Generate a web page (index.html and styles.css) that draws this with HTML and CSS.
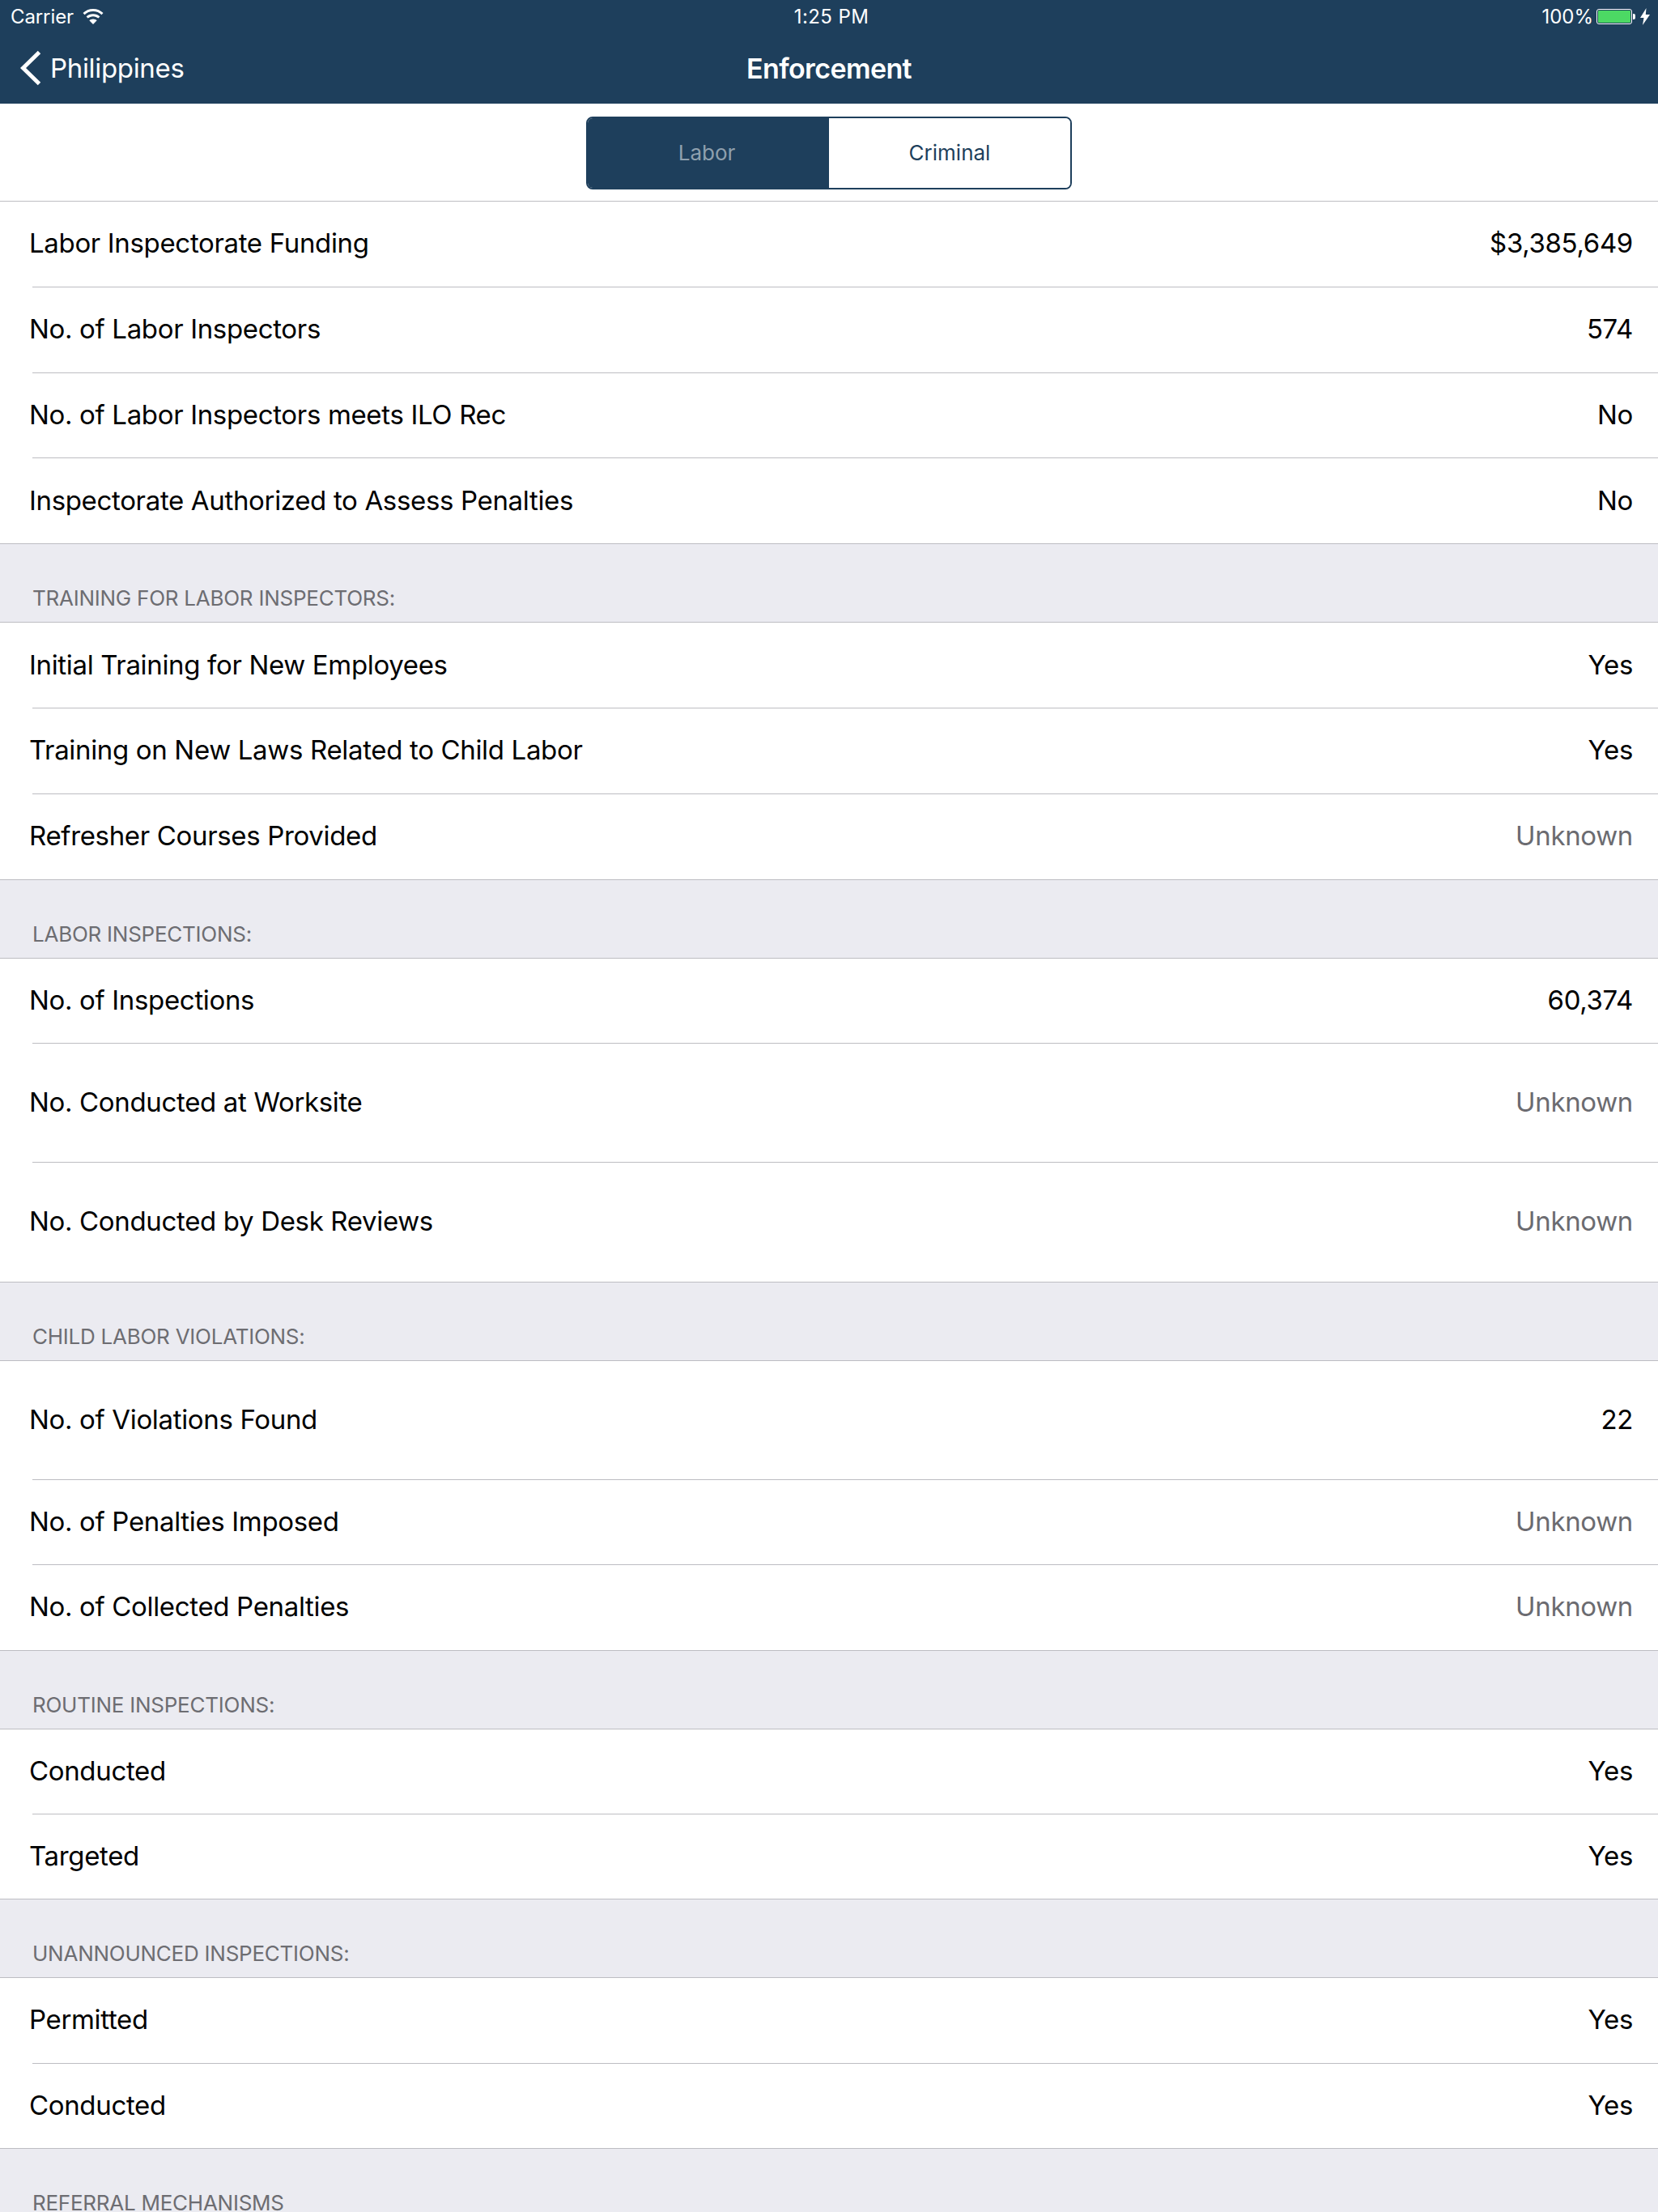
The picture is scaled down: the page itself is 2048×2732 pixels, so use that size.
FILE: index.html
```html
<!DOCTYPE html>
<html lang="en">
<head>
    <meta charset="UTF-8">
    <title>Enforcement</title>
    <link rel="stylesheet" href="styles.css">
</head>
<body>
    <header class="nav">
        <div class="status-bar">
            <div class="status-left">
                <span>Carrier</span>
                <svg class="wifi" width="26" height="19" viewBox="0 0 26 19">
                    <path fill="#fff" d="M13 0C8 0 3.800 1.900.5 5l2 2.200C5.200 4.600 8.900 3 13 3s7.800 1.600 10.500 4.200l2-2.200C22.200 1.900 18 0 13 0z"/>
                    <path fill="#fff" d="M13 6.200c-3.300 0-6.200 1.200-8.400 3.200l2 2.200C8.300 10.100 10.500 9.200 13 9.200s4.700.9 6.400 2.400l2-2.200c-2.200-2-5.100-3.200-8.400-3.200z"/>
                    <path fill="#fff" d="M13 12.400c-1.900 0-3.500.7-4.700 1.800L13 19l4.700-4.800c-1.200-1.100-2.800-1.800-4.700-1.800z"/>
                </svg>
            </div>
            <div class="status-time">1:25 PM</div>
            <div class="status-right">
                <span>100%</span>
                <div class="battery"><div class="battery-fill"></div></div>
                <div class="battery-nub"></div>
                <svg class="bolt" width="12" height="21" viewBox="0 0 12 21">
                    <path fill="#fff" d="M7.500 0L0 12h4.500L3 21l9-13H6.800z"/>
                </svg>
            </div>
        </div>
        <div class="nav-bar">
            <a class="back" href="#">
                <svg width="26" height="44" viewBox="0 0 26 44">
                    <path fill="none" stroke="#fff" stroke-width="5" d="M23.500 2.500L3.500 22l20 19.500"/>
                </svg>
                <span>Philippines</span>
            </a>
            <h1>Enforcement</h1>
        </div>
    </header>

    <div class="toolbar">
        <div class="segments">
            <button class="segment active">Labor</button>
            <button class="segment">Criminal</button>
        </div>
    </div>

    <main>
        <section class="group roomy">
            <div class="row"><span>Labor Inspectorate Funding</span><span>$3,385,649</span></div>
            <div class="row"><span>No. of Labor Inspectors</span><span>574</span></div>
            <div class="row"><span>No. of Labor Inspectors meets ILO Rec</span><span>No</span></div>
            <div class="row"><span>Inspectorate Authorized to Assess Penalties</span><span>No</span></div>
        </section>

        <h2>TRAINING FOR LABOR INSPECTORS:</h2>
        <section class="group roomy">
            <div class="row"><span>Initial Training for New Employees</span><span>Yes</span></div>
            <div class="row"><span>Training on New Laws Related to Child Labor</span><span>Yes</span></div>
            <div class="row"><span>Refresher Courses Provided</span><span class="unknown">Unknown</span></div>
        </section>

        <h2>LABOR INSPECTIONS:</h2>
        <section class="group">
            <div class="row"><span>No. of Inspections</span><span>60,374</span></div>
            <div class="row tall"><span>No. Conducted at Worksite</span><span class="unknown">Unknown</span></div>
            <div class="row tall"><span>No. Conducted by Desk Reviews</span><span class="unknown">Unknown</span></div>
        </section>

        <h2>CHILD LABOR VIOLATIONS:</h2>
        <section class="group">
            <div class="row tall"><span>No. of Violations Found</span><span>22</span></div>
            <div class="row"><span>No. of Penalties Imposed</span><span class="unknown">Unknown</span></div>
            <div class="row"><span>No. of Collected Penalties</span><span class="unknown">Unknown</span></div>
        </section>

        <h2>ROUTINE INSPECTIONS:</h2>
        <section class="group">
            <div class="row"><span>Conducted</span><span>Yes</span></div>
            <div class="row"><span>Targeted</span><span>Yes</span></div>
        </section>

        <h2>UNANNOUNCED INSPECTIONS:</h2>
        <section class="group">
            <div class="row"><span>Permitted</span><span>Yes</span></div>
            <div class="row"><span>Conducted</span><span>Yes</span></div>
        </section>

        <h2>REFERRAL MECHANISMS</h2>
    </main>
</body>
</html>
```

FILE: styles.css
```css
html, body {
    height: 2732px;
    overflow: hidden;
}

body {
    margin: 0;
    font-family: Inter, "Liberation Sans", sans-serif;
    font-weight: 375;
    background-color: #ebebf1;
    color: #000;
}

/* Top bar */
.nav {
    height: 128px;
    background-color: #1e3f5c;
    color: #fff;
}

.status-bar {
    height: 40px;
    padding: 0 10px 0 13px;
    display: grid;
    grid-template-columns: 1fr auto 1fr;
    align-items: center;
    font-size: 24px;
}

.status-left {
    display: flex;
    align-items: center;
    gap: 11px;
    letter-spacing: -0.1px;
}

.status-time {
    margin-left: 3px;
    letter-spacing: 0.4px;
}

.status-right {
    display: flex;
    align-items: center;
    justify-content: flex-end;
}

.battery {
    width: 44px;
    height: 19px;
    margin-left: 4px;
    padding: 1px;
    box-sizing: border-box;
    border: 1px solid #fff;
    border-radius: 3px;
}

.battery-fill {
    height: 100%;
    background-color: #4cd964;
    border-radius: 1px;
}

.battery-nub {
    width: 3px;
    height: 7px;
    margin-left: 1px;
    background-color: #fff;
    border-radius: 0 2px 2px 0;
}

.bolt {
    margin-left: 6px;
}

.nav-bar {
    height: 88px;
    display: grid;
    grid-template-columns: 1fr auto 1fr;
    align-items: center;
    padding: 0 25px;
}

.back {
    display: flex;
    align-items: center;
    gap: 11px;
    color: #fff;
    text-decoration: none;
    font-size: 33px;
    letter-spacing: -0.33px;
}

.nav-bar h1 {
    grid-column: 2;
    margin: 0;
    font-size: 34px;
    font-weight: 600;
    letter-spacing: -0.6px;
}

/* Labor / Criminal switch */
.toolbar {
    height: 121px;
    background-color: #fff;
    display: flex;
    justify-content: center;
    padding-top: 16px;
    box-sizing: border-box;
    border-bottom: 1px solid #bdbdc2;
}

.segments {
    width: 600px;
    height: 90px;
    display: flex;
    box-sizing: border-box;
    border: 2px solid #1e3f5c;
    border-radius: 8px;
    overflow: hidden;
}

.segment {
    flex: 0 0 50%;
    border: none;
    background: #fff;
    color: #1e3f5c;
    font-family: inherit;
    font-weight: inherit;
    font-size: 26px;
    padding: 0 0 2px;
}

.segment.active {
    background-color: #1e3f5c;
    color: #8fa0ae;
    padding-right: 4px;
}

/* Table */
.group {
    background-color: #fff;
    padding-left: 40px;
}

.row {
    height: 105.33px;
    display: flex;
    justify-content: space-between;
    align-items: center;
    padding: 0 31px 2px 0;
    box-sizing: border-box;
    border-bottom: 1px solid #bdbdc2;
    font-size: 33px;
    letter-spacing: -0.34px;
}

.roomy .row {
    height: 105.8px;
}

.row.tall {
    height: 147.33px;
}

/* last row's line runs the full width */
.row:last-child {
    margin-left: -40px;
    padding-left: 40px;
}

.row > span:first-child {
    margin-left: -4px;
}

.unknown {
    color: #6b6b70;
}

h2 {
    margin: 0;
    height: 97px;
    padding: 51px 0 0 40px;
    box-sizing: border-box;
    border-bottom: 1px solid #bdbdc2;
    font-size: 26px;
    font-weight: 375;
    letter-spacing: -0.25px;
    color: #6d6d72;
}
```
